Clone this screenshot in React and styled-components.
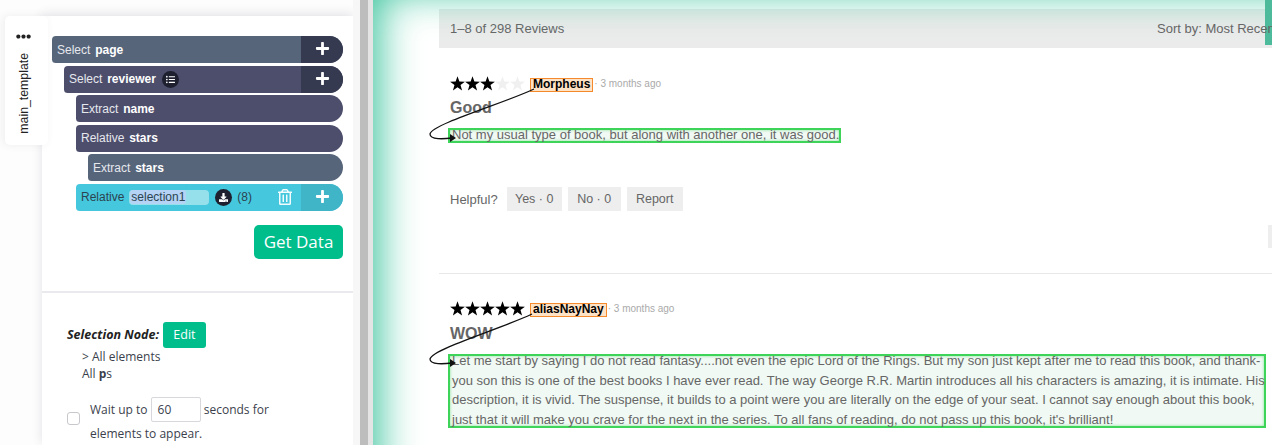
import React from 'react';
import styled, { createGlobalStyle } from 'styled-components';
import { FaPlus, FaListUl, FaDownload, FaRegTrashAlt, FaEllipsisH } from 'react-icons/fa';

const GlobalStyle = createGlobalStyle`
  html, body { margin: 0; padding: 0; background: #fff; overflow: hidden; }
  * { box-sizing: border-box; }
`;

const App = () => (
  <Page>
    <GlobalStyle />
    <LeftColumn>
      <Tab>
        <FaEllipsisH size={15} color="#222" />
        <TabLabel>main_template</TabLabel>
      </Tab>
      <Panel>
        <Tree>
          <Bar $tone="slate">
            <BarLabel>Select <b>page</b></BarLabel>
            <PlusArea><FaPlus size={15} /></PlusArea>
          </Bar>
          <Bar $tone="indigo" $depth={1}>
            <BarLabel>Select <b>reviewer</b></BarLabel>
            <RoundIcon><FaListUl size={9} /></RoundIcon>
            <PlusArea><FaPlus size={15} /></PlusArea>
          </Bar>
          <Bar $tone="indigo" $depth={2}>
            <BarLabel>Extract <b>name</b></BarLabel>
          </Bar>
          <Bar $tone="indigo" $depth={2}>
            <BarLabel>Relative <b>stars</b></BarLabel>
          </Bar>
          <Bar $tone="slate" $depth={3}>
            <BarLabel>Extract <b>stars</b></BarLabel>
          </Bar>
          <Bar $tone="cyan" $depth={2}>
            <BarLabel>Relative</BarLabel>
            <NameInput><span>selection1</span></NameInput>
            <RoundIcon><FaDownload size={9} /></RoundIcon>
            <Count>(8)</Count>
            <TrashIcon><FaRegTrashAlt size={16} /></TrashIcon>
            <PlusArea $tone="cyan"><FaPlus size={15} /></PlusArea>
          </Bar>
        </Tree>
        <Actions>
          <GetData>Get Data</GetData>
        </Actions>
        <Details>
          <NodeRow>
            <NodeTitle>Selection Node:</NodeTitle>
            <EditButton>Edit</EditButton>
          </NodeRow>
          <NodeInfo>
            <div>&gt; All elements</div>
            <div>All <b>p</b>s</div>
          </NodeInfo>
          <WaitRow>
            <Checkbox />
            <WaitText>
              Wait up to <SecondsBox>60</SecondsBox> seconds for<br />
              elements to appear.
            </WaitText>
          </WaitRow>
        </Details>
      </Panel>
    </LeftColumn>
    <Gutter />
    <Content>
      <SortBar>
        <span>1–8 of 298 Reviews</span>
        <SortBy>Sort by: Most Recent</SortBy>
      </SortBar>
      <SortMarker />
      <Review>
        <ReviewHead>
          <Stars count={3} />
          <NameTag>Morpheus</NameTag>
          <Ago>· 3 months ago</Ago>
        </ReviewHead>
        <ReviewTitle $tight>Good</ReviewTitle>
        <ReviewBody>
          <BodyText>Not my usual type of book, but along with another one, it was good.</BodyText>
        </ReviewBody>
        <Helpful>
          <span>Helpful?</span>
          <HelpButton $gap={9} $width={55}>Yes · 0</HelpButton>
          <HelpButton $width={53}>No · 0</HelpButton>
          <HelpButton $width={56}>Report</HelpButton>
        </Helpful>
        <SideStub />
      </Review>
      <Review $second>
        <ReviewHead>
          <Stars count={5} />
          <NameTag>aliasNayNay</NameTag>
          <Ago>· 3 months ago</Ago>
        </ReviewHead>
        <ReviewTitle>WOW</ReviewTitle>
        <ReviewBody $block>
          <BodyText>
            Let me start by saying I do not read fantasy....not even the epic Lord of the Rings. But my son just kept after me to read this book, and thank-<br />
            you son this is one of the best books I have ever read. The way George R.R. Martin introduces all his characters is amazing, it is intimate. His<br />
            description, it is vivid. The suspense, it builds to a point were you are literally on the edge of your seat. I cannot say enough about this book,<br />
            just that it will make you crave for the next in the series. To all fans of reading, do not pass up this book, it's brilliant!
          </BodyText>
        </ReviewBody>
      </Review>
      <Glow />
    </Content>
    <Arrows viewBox="0 0 1272 445" width="1272" height="445">
      <path d="M534 89 C505 103 432 124 430 134 C430 140 444 139 452 138" fill="none" stroke="#111" strokeWidth="1.3" />
      <path d="M450 134 L456 138 L450 142 Z" fill="#111" />
      <path d="M532 314 C503 328 432 349 430 359 C430 365 444 364 452 363" fill="none" stroke="#111" strokeWidth="1.3" />
      <path d="M450 359 L456 363 L450 367 Z" fill="#111" />
    </Arrows>
  </Page>
);

const Stars = ({ count }) => (
  <StarRow>
    {[0, 1, 2, 3, 4].map((i) => (
      <svg key={i} viewBox="0 0 16 16" width="15" height="15">
        <polygon
          points="8,0.3 10,5.9 15.9,6.1 11.2,9.7 12.9,15.4 8,12 3.1,15.4 4.8,9.7 0.1,6.1 6,5.9"
          fill={i < count ? '#000' : '#f0f0f0'}
        />
      </svg>
    ))}
  </StarRow>
);

export default App;

const barTones = {
  slate: '#56657a',
  indigo: '#4d4e6c',
  cyan: '#45c8de',
};

const Page = styled.div`
  position: relative;
  display: flex;
  width: 1272px;
  height: 445px;
  overflow: hidden;
  background: #fff;
`;

const LeftColumn = styled.div`
  display: flex;
  flex: 0 0 353px;
  padding: 16px 0 0 5px;
  background: #fdfdfd;
`;

const Tab = styled.div`
  position: relative;
  z-index: 1;
  display: flex;
  flex-direction: column;
  align-items: center;
  flex: 0 0 43px;
  height: 129px;
  margin-right: -6px;
  padding: 13px 6px 0 0;
  background: #fff;
  border-radius: 5px;
  box-shadow: -2px 0 8px rgba(60, 60, 90, 0.08);
`;

const TabLabel = styled.div`
  margin: 9px 0 0 2px;
  writing-mode: vertical-rl;
  transform: rotate(180deg);
  font: 12.3px/1 "Liberation Sans", Arial, sans-serif;
  color: #222;
`;

const Panel = styled.div`
  flex: 1;
  display: flex;
  flex-direction: column;
  background: #fff;
  box-shadow: 0 -2px 10px rgba(60, 60, 90, 0.14);
  > * { flex-shrink: 0; }
`;

const Tree = styled.div`
  display: flex;
  flex-direction: column;
  gap: 2.6px;
  padding: 20px 10px 0;
`;

const Bar = styled.div`
  display: flex;
  align-items: center;
  flex: 0 0 27px;
  margin-left: ${(p) => (p.$depth || 0) * 12}px;
  padding-left: 5px;
  overflow: hidden;
  color: ${(p) => (p.$tone === 'cyan' ? '#2c4350' : '#e6e8ee')};
  background: ${(p) => barTones[p.$tone]};
  border-radius: 4px 14px 14px 4px;
  font: 12px "Liberation Sans", Arial, sans-serif;
  b { margin-left: 1.5px; color: #fff; }
`;

const BarLabel = styled.span`
  white-space: nowrap;
`;

const PlusArea = styled.div`
  display: flex;
  align-items: center;
  justify-content: center;
  flex: 0 0 42px;
  height: 100%;
  margin-left: auto;
  padding-bottom: 2px;
  color: #fff;
  background: ${(p) => (p.$tone === 'cyan' ? '#3fb5c7' : '#353a50')};
`;

const RoundIcon = styled.div`
  display: flex;
  align-items: center;
  justify-content: center;
  flex: 0 0 17px;
  height: 17px;
  margin-left: 6px;
  color: #fff;
  background: #1e2030;
  border-radius: 50%;
`;

const NameInput = styled.div`
  flex: 0 0 80px;
  height: 15px;
  margin-left: 5px;
  padding-left: 1px;
  line-height: 15px;
  background: #96e0ec;
  border-radius: 4px;
  span { padding: 0 1px; background: #b4d3f5; border-radius: 3px; }
`;

const Count = styled.span`
  margin-left: 5px;
  font-size: 12px;
`;

const TrashIcon = styled.div`
  display: flex;
  flex: 1;
  justify-content: flex-end;
  margin-right: 8px;
  color: #f2fbfd;
`;

const Actions = styled.div`
  display: flex;
  justify-content: flex-end;
  height: 82px;
  padding: 14px 10px 0;
  border-bottom: 2px solid #e9e9ee;
`;

const GetData = styled.button`
  width: 89px;
  height: 34px;
  padding: 0;
  color: #fff;
  background: #00be8c;
  border: 0;
  border-radius: 5px;
  font: 17px "Open Sans", sans-serif;
`;

const Details = styled.div`
  padding: 29px 0 0 25px;
  color: #3b3f4c;
  font: 12px "Open Sans", sans-serif;
`;

const NodeRow = styled.div`
  display: flex;
  align-items: center;
  gap: 4px;
`;

const NodeTitle = styled.span`
  font-size: 12.5px;
  font-weight: 700;
  font-style: italic;
  color: #222;
`;

const EditButton = styled.button`
  width: 43px;
  height: 26px;
  padding: 0;
  color: #fff;
  background: #00be8c;
  border: 0;
  border-radius: 3px;
  font: 12.5px "Open Sans", sans-serif;
`;

const NodeInfo = styled.div`
  margin-left: 15px;
  line-height: 17.5px;
`;

const WaitRow = styled.div`
  display: flex;
  align-items: center;
  margin-top: 14px;
`;

const Checkbox = styled.div`
  flex: 0 0 13px;
  height: 13px;
  margin: 0 10px 5px 0;
  background: #fff;
  border: 1px solid #c8c8cc;
  border-radius: 3px;
`;

const WaitText = styled.div`
  line-height: 24px;
`;

const SecondsBox = styled.span`
  display: inline-block;
  width: 50px;
  height: 25px;
  padding-left: 6px;
  line-height: 23px;
  background: #fff;
  border: 1px solid #d8d8dc;
  border-radius: 2px;
`;

const Gutter = styled.div`
  flex: 0 0 20px;
  background: linear-gradient(to right, #f7f7f7 0 7px, #bdbdbd 7px 15px, #e4e4e4 15px 20px);
`;

const Content = styled.div`
  position: relative;
  flex: 1;
  min-width: 0;
  padding: 9px 0 0 66px;
  background: #fff;
  font-family: "Liberation Sans", Arial, sans-serif;
  color: #666;
`;

const SortBar = styled.div`
  display: flex;
  justify-content: space-between;
  height: 39px;
  padding: 12px 0 0 11px;
  margin-right: -14px;
  white-space: nowrap;
  overflow: hidden;
  font-size: 13px;
  color: #666;
  background: #ebebeb;
`;

/* the text runs over the green marker in the reference */
const SortBy = styled.span`
  position: relative;
  z-index: 4;
  width: 129px;
`;

const SortMarker = styled.div`
  position: absolute;
  top: 0;
  right: 0;
  z-index: 3;
  width: 7px;
  height: 45px;
  background: #4dbb9b;
`;

const Review = styled.div`
  position: relative;
  height: ${(p) => (p.$second ? '172px' : '226px')};
  padding: ${(p) => (p.$second ? '27px' : '28px')} 0 0 11px;
  border-bottom: ${(p) => (p.$second ? '0' : '1px solid #e8e8e8')};
`;

const ReviewHead = styled.div`
  display: flex;
  align-items: flex-start;
  height: 15px;
`;

const StarRow = styled.div`
  display: flex;
  width: 80px;
`;

const NameTag = styled.span`
  height: 14px;
  margin-top: 2px;
  padding: 0 2px;
  color: #000;
  background: #fde2c6;
  border: 1.5px solid #f58a2c;
  font-size: 12px;
  font-weight: 700;
  line-height: 11px;
`;

const Ago = styled.span`
  margin: 2px 0 0 1px;
  font-size: 10px;
  color: #aaa;
`;

const ReviewTitle = styled.div`
  margin-top: ${(p) => (p.$tight ? '7px' : '8px')};
  font-size: 16px;
  font-weight: 700;
  line-height: 20px;
  color: #666;
`;

const ReviewBody = styled.div`
  ${(p) => (p.$block ? 'width: 818px; height: 74px;' : 'width: 393px; height: 15px;')}
  margin: 10px 0 0 -2px;
  padding-left: 2px;
  background: #f0f9f3;
  border: 2px solid #3ed45a;
  box-shadow: inset 0 0 3px rgba(62, 212, 90, 0.6);
`;

const BodyText = styled.div`
  margin-top: -5px;
  white-space: nowrap;
  font-size: 13px;
  line-height: 19.5px;
`;

const Helpful = styled.div`
  display: flex;
  align-items: center;
  margin-top: 44px;
  font: 13px "Liberation Sans", Arial, sans-serif;
`;

const HelpButton = styled.span`
  display: inline-flex;
  align-items: center;
  justify-content: center;
  width: ${(p) => p.$width}px;
  height: 24px;
  margin-left: ${(p) => p.$gap || 6}px;
  background: #eee;
  font-size: 12.5px;
`;

const SideStub = styled.div`
  position: absolute;
  top: 177px;
  right: 0;
  width: 4px;
  height: 23px;
  background: #eee;
`;

const Glow = styled.div`
  position: absolute;
  inset: 0 -80px -80px 0;
  z-index: 2;
  pointer-events: none;
  box-shadow: inset 6px -8px 40px #38c39b;
`;

const Arrows = styled.svg`
  position: absolute;
  top: 0;
  left: 0;
  z-index: 4;
  pointer-events: none;
`;
